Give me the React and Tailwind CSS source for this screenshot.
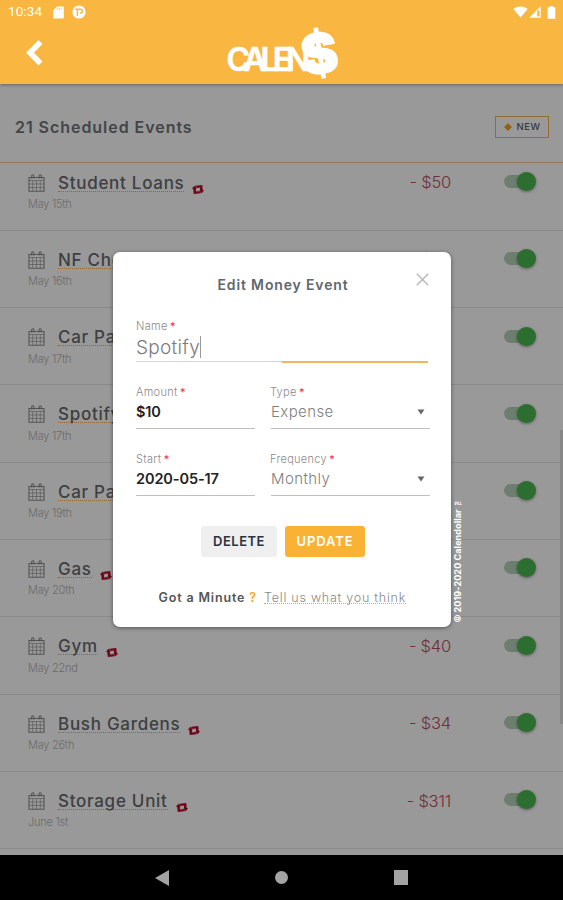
import React, { useState } from 'react';
import { X } from 'lucide-react';

const EVENTS = [
    { id: 1, name: 'Student Loans', date: 'May 15th', amount: '- $50' },
    { id: 2, name: 'NF Check', date: 'May 16th', amount: '- $90' },
    { id: 3, name: 'Car Payment', date: 'May 17th', amount: '- $250' },
    { id: 4, name: 'Spotify', date: 'May 17th', amount: '- $10' },
    { id: 5, name: 'Car Parking', date: 'May 19th', amount: '- $20' },
    { id: 6, name: 'Gas', date: 'May 20th', amount: '- $30' },
    { id: 7, name: 'Gym', date: 'May 22nd', amount: '- $40' },
    { id: 8, name: 'Bush Gardens', date: 'May 26th', amount: '- $34' },
    { id: 9, name: 'Storage Unit', date: 'June 1st', amount: '- $311' },
];

const CalendarIcon = () => (
    <svg width="17" height="18" viewBox="0 0 17 18" fill="none" stroke="#a2a2a2" className="shrink-0">
        <path d="M1 3.5h15v13.7H1z" stroke="#8c8c8c" strokeWidth="1.1" />
        <path d="M1 6.5h15M1 10h15M1 13.5h15M4.7 6.5v10.5M8.5 6.5v10.5M12.3 6.5v10.5" strokeWidth="0.8" />
        <path d="M3.7 4.5V1.8a1.1 1.1 0 0 1 2.2 0v2.7M11.1 4.5V1.8a1.1 1.1 0 0 1 2.2 0v2.7" stroke="#8c8c8c" strokeWidth="1.1" />
    </svg>
);

const RepeatIcon = () => (
    <svg width="12" height="9" viewBox="0 0 12 9" className="shrink-0 ml-[8px] mt-[13px] -rotate-6">
        <path d="M2.6 0.3L5.2 3.4H4v2.8h3l2 2.300H1.300V3.400H0z" fill="#b81030" />
        <path d="M9.400 8.700L6.800 5.600H8V2.800H5L3 0.500H10.700V5.600H12z" fill="#b81030" />
    </svg>
);

const Toggle = ({ on, onClick }) => (
    <button onClick={onClick} className="flex items-center w-8 h-5 -mt-[2px]">
        <span className={`flex items-center w-[29px] h-[13px] rounded-full ${on ? 'bg-[#b5d3b7] justify-end' : 'bg-gray-300 justify-start'}`}>
            <span className={`w-[19px] h-[19px] -mr-[3px] shrink-0 rounded-full shadow-[0_1px_3px_rgba(0,0,0,0.4)] ${on ? 'bg-[#4ab84f]' : 'bg-gray-50'}`} />
        </span>
    </button>
);

const EventRow = ({ event }) => {
    const [on, setOn] = useState(true);
    return (
        <div className="h-[77.3px] shrink-0 border-b border-[#e6e6e6] pl-7 pr-[27px] pt-[18.5px]">
            <div className="flex items-center h-[21px]">
                <CalendarIcon />
                <span className="ml-[13px] h-[18px] text-[17px] leading-[18px] font-medium tracking-[0.72px] text-[#686a6e] border-b border-dotted border-[#f0a860]">{event.name}</span>
                <RepeatIcon />
                <span className="ml-auto mr-[53px] text-[16.5px] font-light text-[#b8505f] tracking-[-0.2px]">{event.amount}</span>
                <Toggle on={on} onClick={() => setOn(!on)} />
            </div>
            <div className="mt-[4px] text-[11px] leading-[14px] font-light tracking-[-0.25px] text-[#b4b4b4]">{event.date}</div>
        </div>
    );
};

const StatusBar = () => (
    <div className="flex items-center h-6 pl-2 pr-[7px] text-white">
        <span className="font-[Roboto] text-[13.5px] leading-none tracking-[0.1px]">10:34</span>
        <svg width="11" height="13" viewBox="0 0 11 13" className="ml-[11px]">
            <path d="M4 0.5h6a.8.8 0 0 1 .8.8v10.4a.8.8 0 0 1-.8.8H1a.8.8 0 0 1-.8-.8V4.3z" fill="#fff" />
            <path d="M4.2 2v2M6.2 2v2M8.2 2v2" stroke="#f9b641" strokeWidth="0.7" />
        </svg>
        <svg width="14" height="14" viewBox="0 0 14 14" className="ml-[8px]">
            <circle cx="7" cy="7" r="6.6" fill="#fff" />
            <path d="M3.200 4.300H8.400a1.900 1.900 0 0 1 0 3.800H7.800M5.400 4.300V11" fill="none" stroke="#f9b641" strokeWidth="1.4" />
        </svg>
        <svg width="15" height="12" viewBox="0 0 15 12" className="ml-auto">
            <path d="M7.5 11.6L0.3 2.9C4.4-.4 10.6-.4 14.7 2.9z" fill="#fff" />
        </svg>
        <svg width="12" height="12" viewBox="0 0 12 12" className="ml-[1px]">
            <path d="M0.3 11.7L11.7 0.3v11.4z" fill="#fff" />
            <path d="M8.2 4.5h2.300v6H8.200z" fill="#f9b641" />
        </svg>
        <svg width="9" height="13" viewBox="0 0 9 13" className="ml-[6px]">
            <path d="M3 0h3v1.3h2.3v11.4H.7V1.3H3z" fill="#fff" />
        </svg>
    </div>
);

const Header = () => (
    <header className="relative z-20 h-[84px] shrink-0 bg-[#f9b641] shadow-[0_1px_3px_rgba(0,0,0,0.35)]">
        <StatusBar />
        <div className="flex h-[60px]">
            <svg width="18" height="28" viewBox="0 0 18 28" className="ml-[25px] mt-[15px]">
                <path d="M15.5 3L5 13.8L15.5 24.5" fill="none" stroke="#fff" strokeWidth="5.6" />
            </svg>
            <div className="flex items-start ml-[183.5px] text-white leading-none">
                <span className="w-[74px] mt-[20px] text-[32px] font-semibold tracking-[-6px] [-webkit-text-stroke:0.6px_white]">CALEN</span>
                <span className="mt-[2px] text-[55px] font-black -rotate-[9deg] [-webkit-text-stroke:1.5px_white]">$</span>
            </div>
        </div>
    </header>
);

const Label = ({ children }) => (
    <div className="text-[11px] leading-[14px] font-light tracking-[0.3px] text-[#8a8a8a]">{children} <span className="-ml-[1px] font-normal text-[#e0334c]">*</span></div>
);

const InputField = ({ label, value }) => (
    <div className="w-[119px]">
        <Label>{label}</Label>
        <div className="h-[30px] pt-[3px] border-b border-[#c0c0c0] text-[14.5px] leading-[20px] font-semibold tracking-[-0.1px] text-[#222]">{value}</div>
    </div>
);

const SelectField = ({ label, value }) => (
    <div className="w-[160px]">
        <Label>{label}</Label>
        <div className="flex justify-between ml-[1px] h-[30px] pt-[3px] pr-[5px] border-b border-[#c0c0c0] text-[15px] leading-[20px] font-light tracking-[0.4px] text-[#808080]">
            {value}
            <svg width="8" height="6" viewBox="0 0 8 6" className="mt-[7px]"><path d="M0.5 0.5h7L4 5.5z" fill="#666" /></svg>
        </div>
    </div>
);

const EditModal = () => (
    <div className="absolute z-30 left-[113px] top-[252px] w-[338px] h-[375px] rounded-[7px] bg-white pl-[23px] pr-[21px] shadow-[0_1px_4px_rgba(0,0,0,0.45)]">
        <X size={21} strokeWidth={1.9} className="absolute right-[18px] top-[17px] text-[#bdbdbd]" />
        <h2 className="pt-[24px] text-center text-[14px] leading-[18px] font-semibold tracking-[0.85px] text-[#60676f]">Edit Money Event</h2>

        <div className="mt-[25px]">
            <Label>Name</Label>
            <div className="flex items-start h-[28px] pt-[3px] text-[19px] leading-[23px] font-light tracking-[0.3px] text-[#7c7c7c]">
                <span>Spotify</span>
                <span className="w-px h-[22px] bg-[#999]" />
            </div>
            <div className="flex h-[2px] w-[292px]">
                <span className="w-1/2 h-px bg-[#d4d4d4]" />
                <span className="w-1/2 bg-[#f2b563]" />
            </div>
        </div>

        <div className="flex gap-[15px] mt-[22px]">
            <InputField label="Amount" value="$10" />
            <SelectField label="Type" value="Expense" />
        </div>
        <div className="flex gap-[15px] mt-[23px]">
            <InputField label="Start" value="2020-05-17" />
            <SelectField label="Frequency" value="Monthly" />
        </div>

        <div className="flex gap-2 mt-[30px] ml-[65px] text-[13px] font-semibold">
            <button className="w-[76px] h-[31px] shrink-0 rounded-[3px] bg-[#efefef] text-[#2d3340] tracking-[0.5px]">DELETE</button>
            <button className="w-[80px] h-[31px] shrink-0 rounded-[3px] bg-[#f9b233] text-white tracking-[0.9px]">UPDATE</button>
        </div>

        <div className="flex ml-[22.5px] mt-[33px] text-[12.5px] leading-[16px] whitespace-nowrap">
            <span className="font-semibold tracking-[0.85px] text-[#555]">Got a Minute <span className="text-[#f5a623]">?</span></span>
            <span className="ml-[7px] h-[14px] font-light tracking-[0.75px] text-[#888] border-b border-dotted border-[#f0a050]">Tell us what you think</span>
        </div>

        <div className="absolute left-[338px] bottom-[3px] [writing-mode:vertical-rl] rotate-180 text-[9px] leading-[14px] font-bold tracking-[0.1px] text-white whitespace-nowrap">©2019-2020 Calendollar<span className="font-['Open_Sans'] text-[10px]">™</span></div>
    </div>
);

const NavBar = () => (
    <div className="relative z-20 flex items-center h-[45px] shrink-0 bg-black">
        <svg width="14" height="16" viewBox="0 0 14 16" className="ml-[155px]"><path d="M0 8L14 0v16z" fill="#a3a3a3" /></svg>
        <span className="ml-[106px] w-[13px] h-[13px] rounded-full bg-[#a3a3a3]" />
        <span className="ml-[106px] w-[14px] h-[15px] bg-[#a3a3a3]" />
    </div>
);

const App = () => (
    <div className="relative flex flex-col w-[563px] h-[900px] overflow-hidden bg-white font-[Inter,sans-serif]">
        <Header />
        <div className="flex items-center justify-between h-[79px] shrink-0 pl-[15px] pr-[14px] pt-[8px] border-b border-[#f5c8a0]">
            <h1 className="text-[16px] font-semibold tracking-[0.95px] text-[#707478]">21 Scheduled Events</h1>
            <button className="flex items-center justify-center gap-[5px] w-[54px] h-[22px] border border-[#f5b560] text-[9.5px] font-medium tracking-[0.5px] text-[#5a6068]">
                <svg width="8" height="8" viewBox="0 0 8 8"><path d="M4 0L6 2L8 4L6 6L4 8L2 6L0 4l2-2z" fill="#f5a623" /></svg>
                NEW
            </button>
        </div>
        <div className="flex-1 overflow-hidden">
            <div className="flex flex-col -mt-[9.5px]">
                {EVENTS.map(e => <EventRow key={e.id} event={e} />)}
            </div>
        </div>
        <NavBar />

        {/* scroll thumb */}
        <div className="absolute right-0 top-[430px] w-[3px] h-[294px] bg-[#e2e2e2]" />
        {/* backdrop */}
        <div className="absolute inset-0 z-10 bg-black/40" />
        <EditModal />
    </div>
);

export default App;
